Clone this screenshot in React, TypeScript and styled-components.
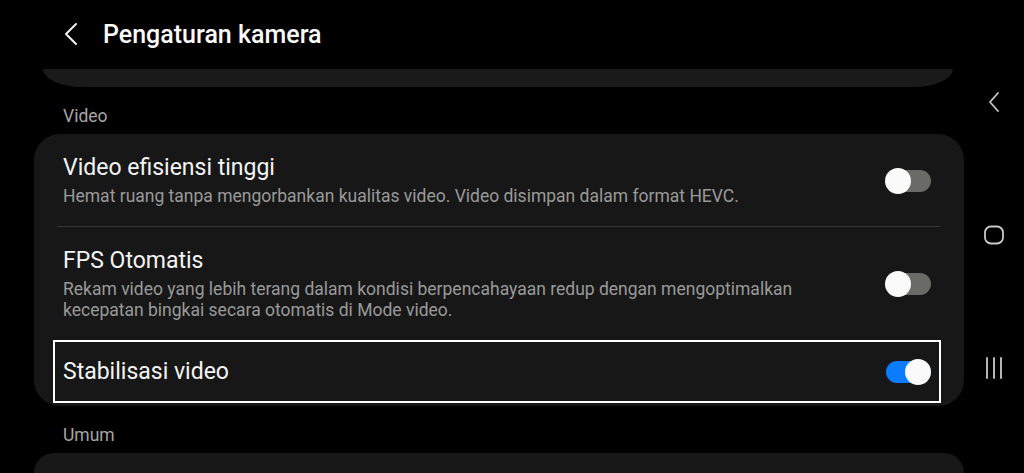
import React from "react";
import styled, { createGlobalStyle } from "styled-components";

const GlobalStyle = createGlobalStyle`
  html, body {
    margin: 0;
    padding: 0;
    background: #000;
    height: 473px;
    overflow: hidden;
  }
  body {
    font-family: Roboto, "Noto Sans", "Liberation Sans", sans-serif;
    color: #f2f2f2;
  }
`;

const Screen = styled.div`
  display: flex;
  width: 1024px;
  height: 473px;
  background: #000;
`;

const Main = styled.div`
  width: 964px;
  display: flex;
  flex-direction: column;
`;

const Header = styled.div`
  height: 69px;
  display: flex;
  align-items: center;
  padding-left: 63px;
  padding-bottom: 1px;
  box-sizing: border-box;
`;

const BackButton = styled.div`
  width: 16px;
  height: 24px;
  display: flex;
  align-items: center;
  margin-right: 24px;
`;

const Title = styled.h1`
  margin: 0;
  font-size: 25px;
  font-weight: 500;
  color: #fafafa;
`;

const ScrolledCard = styled.div`
  margin: 0 11px 0 43px;
  height: 18px;
  background: #1a1a1a;
  border-radius: 0 0 40px 40px / 0 0 18px 18px;
`;

const SectionLabel = styled.div`
  padding: 19px 0 0 63px;
  height: 47px;
  box-sizing: border-box;
  font-size: 17.5px;
  color: #a6a6a6;
`;

const Card = styled.div`
  margin-left: 34px;
  background: #171717;
  border-radius: 26px;
  padding-bottom: 3px;
  display: flex;
  flex-direction: column;
`;

const Row = styled.div<{ $focused?: boolean }>`
  display: flex;
  align-items: center;
  gap: 24px;
  ${(p) =>
    p.$focused
      ? `
    margin: 0 23px 0 19px;
    border: 2px solid #fff;
    padding: 16px 8px 15px 8px;
  `
      : `
    padding: 20px 33px 19px 29px;
  `}
`;

const RowText = styled.div`
  flex: 1;
  display: flex;
  flex-direction: column;
  gap: 4px;
`;

const RowTitle = styled.div`
  font-size: 23px;
  line-height: 28px;
  color: #f4f4f4;
`;

const RowDesc = styled.div`
  font-size: 17.5px;
  line-height: 21px;
  color: #9a9a9a;
  max-width: 760px;
`;

const Divider = styled.div`
  height: 1px;
  margin: 0 24px 0 23px;
  background: #353535;
`;

const Track = styled.div<{ $on?: boolean }>`
  position: relative;
  width: 45px;
  height: 22px;
  border-radius: 11px;
  flex-shrink: 0;
  background: ${(p) => (p.$on ? "#0a7cff" : "#6a6a66")};
`;

const Thumb = styled.div<{ $on?: boolean }>`
  position: absolute;
  top: -2px;
  left: ${(p) => (p.$on ? "19px" : "-1px")};
  width: 26px;
  height: 26px;
  border-radius: 50%;
  background: #fafafa;
`;

const NextCard = styled.div`
  margin-left: 34px;
  flex: 1;
  background: #171717;
  border-radius: 26px 26px 0 0;
`;

const NavBar = styled.div`
  width: 60px;
  display: flex;
  flex-direction: column;
  align-items: center;
  padding-top: 90px;
  gap: 109px;
`;

const NavIcon = styled.div`
  width: 24px;
  height: 24px;
  display: flex;
  align-items: center;
  justify-content: center;
`;

const Toggle: React.FC<{ on?: boolean }> = ({ on }) => (
  <Track $on={on}>
    <Thumb $on={on} />
  </Track>
);

const SettingRow: React.FC<{
  title: string;
  desc?: string;
  on?: boolean;
  focused?: boolean;
}> = ({ title, desc, on, focused }) => (
  <Row $focused={focused}>
    <RowText>
      <RowTitle>{title}</RowTitle>
      {desc && <RowDesc>{desc}</RowDesc>}
    </RowText>
    <Toggle on={on} />
  </Row>
);

export default function App() {
  return (
    <Screen>
      <GlobalStyle />
      <Main>
        <Header>
          <BackButton>
            <svg width="16" height="24" viewBox="0 0 16 24">
              <path
                d="M13 2 L3 12 L13 22"
                fill="none"
                stroke="#f2f2f2"
                strokeWidth="2"
                strokeLinecap="round"
                strokeLinejoin="round"
              />
            </svg>
          </BackButton>
          <Title>Pengaturan kamera</Title>
        </Header>
        <ScrolledCard />
        <SectionLabel>Video</SectionLabel>
        <Card>
          <SettingRow
            title="Video efisiensi tinggi"
            desc="Hemat ruang tanpa mengorbankan kualitas video. Video disimpan dalam format HEVC."
          />
          <Divider />
          <SettingRow
            title="FPS Otomatis"
            desc="Rekam video yang lebih terang dalam kondisi berpencahayaan redup dengan mengoptimalkan kecepatan bingkai secara otomatis di Mode video."
          />
          <SettingRow title="Stabilisasi video" on focused />
        </Card>
        <SectionLabel>Umum</SectionLabel>
        <NextCard />
      </Main>
      <NavBar>
        <NavIcon>
          <svg width="12" height="22" viewBox="0 0 12 22">
            <path
              d="M10 2 L2 11 L10 20"
              fill="none"
              stroke="#c8c8c8"
              strokeWidth="1.8"
              strokeLinecap="round"
              strokeLinejoin="round"
            />
          </svg>
        </NavIcon>
        <NavIcon>
          <svg width="22" height="22" viewBox="0 0 22 22">
            <rect
              x="2"
              y="2.5"
              width="18"
              height="17"
              rx="6"
              fill="none"
              stroke="#c8c8c8"
              strokeWidth="1.8"
            />
          </svg>
        </NavIcon>
        <NavIcon>
          <svg width="20" height="24" viewBox="0 0 20 24">
            <path
              d="M3 2 V22 M10 2 V22 M17 2 V22"
              fill="none"
              stroke="#c8c8c8"
              strokeWidth="1.8"
              strokeLinecap="round"
            />
          </svg>
        </NavIcon>
      </NavBar>
    </Screen>
  );
}
